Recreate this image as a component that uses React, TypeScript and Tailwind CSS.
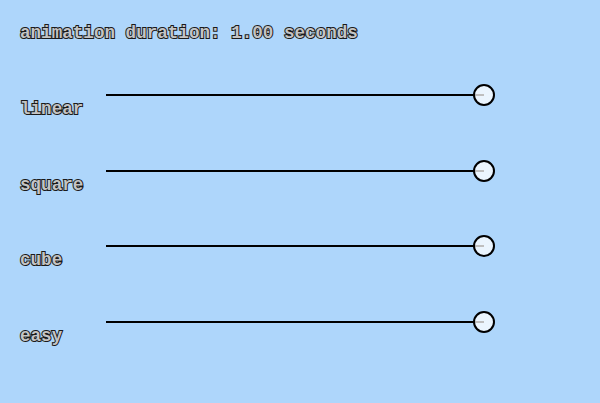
const rows = ['linear', 'square', 'cube', 'easy'];

function Slider() {
  return (
    <div className="relative w-[389px] h-[22px]">
      <div className="absolute left-0 top-[10px] w-[378px] h-[2px] bg-black" />
      <div className="absolute left-[367px] top-0 w-[22px] h-[22px] rounded-full border-2 border-black bg-white/75" />
    </div>
  );
}

export default function App() {
  const outlined =
    "font-['Courier_New',Courier,'Nimbus_Mono_PS','Liberation_Mono',monospace] font-bold text-[17.6px] leading-[20px] text-[#c4c4c4] [-webkit-text-stroke:2px_#1a1a1a] [paint-order:stroke_fill] whitespace-pre";

  return (
    <div className="w-[600px] h-[403px] bg-[#aed6fb] pl-[20px] pt-[23px] overflow-hidden">
      <div className={outlined}>animation duration: 1.00 seconds</div>
      <div className="mt-[41px] flex flex-col">
        {rows.map((name) => (
          <div key={name} className="flex items-start h-[75.7px]">
            <div className={`${outlined} w-[86px] mt-[15px]`}>{name}</div>
            <Slider />
          </div>
        ))}
      </div>
    </div>
  );
}
